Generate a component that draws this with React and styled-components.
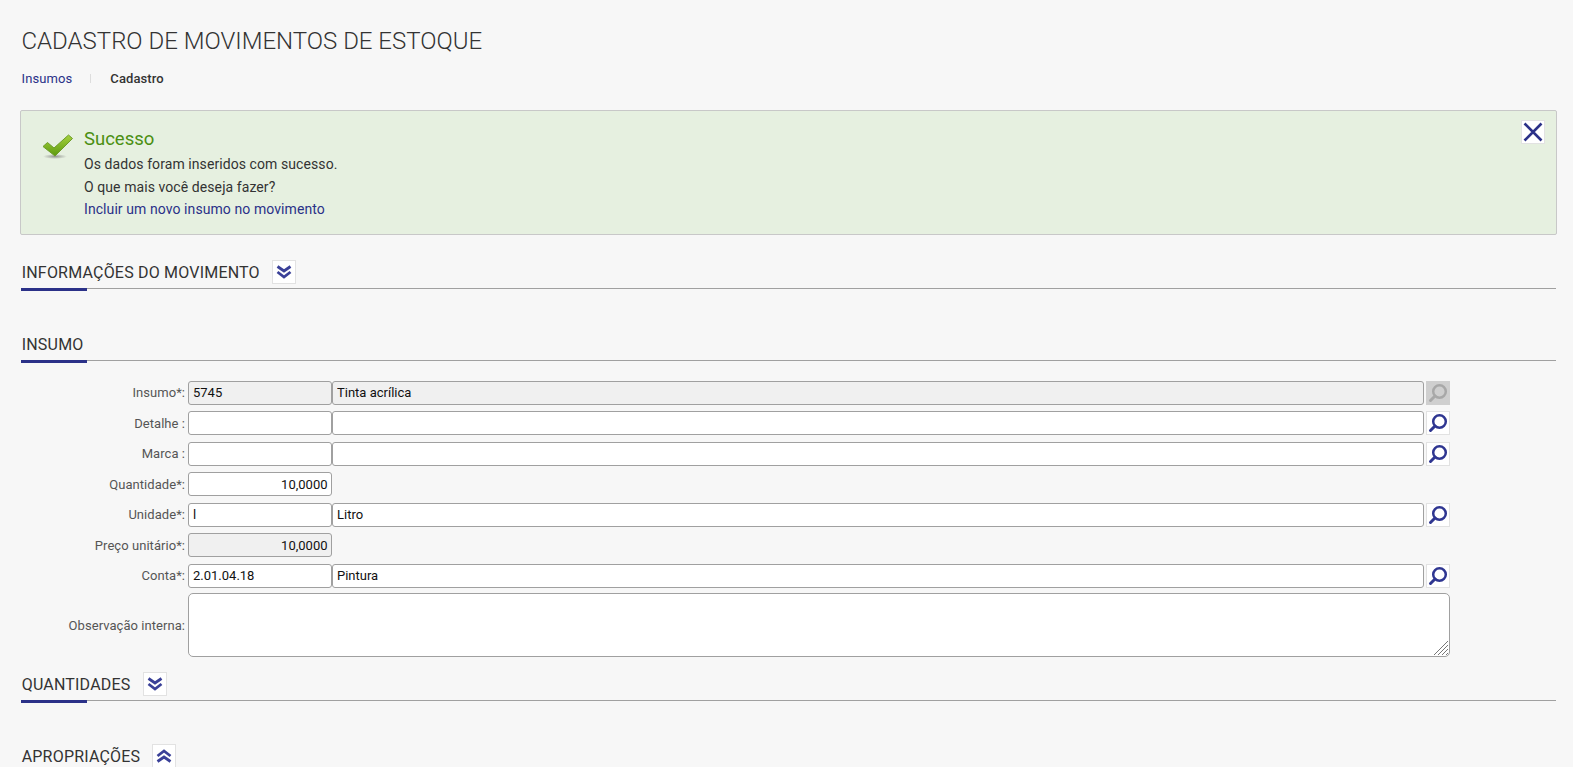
import React from 'react';
import styled, { createGlobalStyle } from 'styled-components';

const Global = createGlobalStyle`
  html, body { margin: 0; padding: 0; background: #f7f7f7; overflow: hidden; }
  body { font-family: Roboto, "Liberation Sans", sans-serif; color: #333; }
`;
const NAVY = '#2b3188';

const Page = styled.main`
  height: 767px;
  padding: 0 16px 0 20px;
  box-sizing: border-box;
  overflow: hidden;
`;
const Title = styled.h1`
  margin: 0;
  padding: 26px 0 0 1.5px;
  font-size: 24px;
  line-height: 30px;
  font-weight: 300;
  color: #333;
`;
const Breadcrumb = styled.nav`
  display: flex;
  align-items: center;
  height: 16px;
  margin-top: 14px;
  padding-left: 1.5px;
  font-size: 13px;
  letter-spacing: 0.1px;
`;
const Crumb = styled.a`
  color: ${NAVY};
`;
const CrumbSep = styled.span`
  width: 1px;
  height: 9px;
  margin: 0 19px 0 18px;
  background: #ddd;
`;
const CrumbCurrent = styled.strong`
  font-weight: 500;
  color: #333;
`;
const Alert = styled.section`
  position: relative;
  display: flex;
  height: 125px;
  margin-top: 24px;
  padding: 17px 0 0 21px;
  box-sizing: border-box;
  background: #e6f0e0;
  border: 1px solid #c8c8c8;
  border-radius: 2px;
`;
const AlertIconSlot = styled.div`
  width: 42px;
  padding-top: 5px;
  flex: none;
`;
const AlertBody = styled.div`
  font-size: 14px;
  letter-spacing: 0.08px;
`;
const AlertTitle = styled.div`
  font-size: 18.5px;
  line-height: 21px;
  letter-spacing: 0;
  color: #4b8f12;
  padding-top: 1px;
  margin-bottom: 3px;
`;
const AlertLine = styled.div`
  line-height: 22.5px;
  color: ${p => (p.$link ? NAVY : '#333')};
`;
const IconButton = styled.button`
  display: flex;
  align-items: center;
  justify-content: center;
  width: 24px;
  height: 24px;
  padding: 0;
  flex: none;
  box-sizing: border-box;
  background: ${p => (p.$disabled ? '#cfcfcf' : '#fff')};
  border: 1px solid ${p => (p.$disabled ? '#cfcfcf' : '#e2e2e2')};
`;
const CloseSlot = styled.div`
  position: absolute;
  top: 9px;
  right: 11px;
`;
const SectionHead = styled.header`
  position: relative;
  display: flex;
  align-items: center;
  gap: 12px;
  height: 30px;
  margin: ${p => p.$mt || 0}px 1px 0;
  padding-bottom: 4px;
  box-sizing: border-box;
  border-bottom: 1px solid #a0a0a0;
  &::after {
    content: '';
    position: absolute;
    left: 0;
    bottom: -3px;
    width: 66px;
    height: 3px;
    background: ${NAVY};
  }
`;
const SectionTitle = styled.h2`
  margin: 0 0 0 0.7px;
  font-size: 16px;
  font-weight: 400;
  line-height: 18px;
  letter-spacing: 0.2px;
  color: #333;
  position: relative;
  top: 1px;
`;
const Form = styled.form`
  display: flex;
  flex-direction: column;
  gap: 6.5px;
  margin: 19.6px 107px 0 1px;
`;
const Row = styled.div`
  display: flex;
  align-items: center;
  height: 24px;
`;
const TallRow = styled(Row)`
  height: 64px;
  margin-top: -1.1px;
`;
const Label = styled.label`
  width: 164px;
  margin-right: 3px;
  flex: none;
  text-align: right;
  font-size: 13px;
  letter-spacing: 0.05px;
  color: #555;
`;
const Field = styled.input`
  height: 24px;
  box-sizing: border-box;
  padding: 0 3px;
  font: 13px Roboto, sans-serif;
  color: #111;
  border: 1px solid #a0a0a0;
  border-radius: 3px;
  outline: none;
  background: ${p => (p.disabled ? '#f0f0f0' : '#fff')};
  text-align: ${p => (p.$right ? 'right' : 'left')};
  opacity: 1;
  -webkit-text-fill-color: #111;
`;
const CodeField = styled(Field)`
  width: 143.5px;
  padding: 0 3px 0 ${p => (p.$right ? 3 : 4)}px;
  flex: none;
`;
const NameField = styled(Field)`
  flex: 1;
  min-width: 0;
  margin-left: 0.5px;
  padding-left: 4px;
`;
const LookupSlot = styled.div`
  margin-left: 2.5px;
  flex: none;
`;
const NotesWrap = styled.div`
  position: relative;
  flex: 1;
  height: 64px;
`;
const Notes = styled.textarea`
  display: block;
  width: 100%;
  height: 64px;
  box-sizing: border-box;
  background: #fff;
  border: 1px solid #a0a0a0;
  border-radius: 5px;
  outline: none;
  padding: 4px;
  resize: none;
`;
const GripSlot = styled.span`
  position: absolute;
  right: 1px;
  bottom: 1px;
  width: 16px;
  height: 16px;
  pointer-events: none;
`;

const Check = () => (
  <svg width="32" height="27" viewBox="0 0 32 27">
    <defs>
      <linearGradient id="chk" x1="0" y1="0" x2="0" y2="1">
        <stop offset="0" stopColor="#a6d23e" />
        <stop offset="1" stopColor="#5c9a0e" />
      </linearGradient>
      <radialGradient id="shd">
        <stop offset="0" stopColor="#777" stopOpacity=".75" />
        <stop offset="1" stopColor="#777" stopOpacity="0" />
      </radialGradient>
    </defs>
    <ellipse cx="13" cy="23.5" rx="12" ry="2.5" fill="url(#shd)" />
    <path d="M1 13.5 L5.5 9.5 L12 15 L26.5 2 L30.5 5.5 L13 23 Z" fill="url(#chk)" stroke="#6d9c2a" strokeWidth="1" strokeLinejoin="round" />
  </svg>
);
const CloseGlyph = () => (
  <svg width="22" height="22" viewBox="0 0 22 22">
    <path d="M2.5 2.5 L19.5 19.5 M19.5 2.5 L2.5 19.5" stroke={NAVY} strokeWidth="2.6" fill="none" />
  </svg>
);
const Chevrons = ({ up }) => (
  <svg width="16" height="14" viewBox="0 0 16 14" style={up ? { transform: 'scaleY(-1)' } : undefined}>
    <path d="M1.5 1.5 L8 6 L14.5 1.5 M1.5 7 L8 12 L14.5 7" stroke="#3a4098" strokeWidth="2.8" fill="none" />
  </svg>
);
const Lens = ({ off }) => (
  <svg width="22" height="22" viewBox="0 0 22 22">
    <circle cx="12.5" cy="9.5" r="6.3" stroke={off ? '#a8a8a8' : '#2f3691'} strokeWidth="2.5" fill={off ? 'none' : '#fff'} />
    <path d="M8 14 L3.5 18.5" stroke={off ? '#a8a8a8' : '#2f3691'} strokeWidth="3" strokeLinecap="round" fill="none" />
  </svg>
);
const Grip = () => (
  <svg width="16" height="16" viewBox="0 0 16 16">
    <path d="M1 15 L15 1 M5 15 L15 5 M9 15 L15 9 M13 15 L15 13" stroke="#777" strokeWidth="1" fill="none" />
  </svg>
);

const Lookup = ({ off }) => (
  <LookupSlot>
    <IconButton type="button" $disabled={off} aria-label="Pesquisar"><Lens off={off} /></IconButton>
  </LookupSlot>
);

const Section = ({ title, mt, icon }) => (
  <SectionHead $mt={mt}>
    <SectionTitle>{title}</SectionTitle>
    {icon && <IconButton type="button" aria-label="Alternar"><Chevrons up={icon === 'up'} /></IconButton>}
  </SectionHead>
);

export default function App() {
  return (
    <>
      <Global />
      <Page>
        <Title>CADASTRO DE MOVIMENTOS DE ESTOQUE</Title>
        <Breadcrumb>
          <Crumb>Insumos</Crumb>
          <CrumbSep />
          <CrumbCurrent>Cadastro</CrumbCurrent>
        </Breadcrumb>
        <Alert>
          <AlertIconSlot><Check /></AlertIconSlot>
          <AlertBody>
            <AlertTitle>Sucesso</AlertTitle>
            <AlertLine>Os dados foram inseridos com sucesso.</AlertLine>
            <AlertLine>O que mais você deseja fazer?</AlertLine>
            <AlertLine $link>Incluir um novo insumo no movimento</AlertLine>
          </AlertBody>
          <CloseSlot><IconButton type="button" aria-label="Fechar"><CloseGlyph /></IconButton></CloseSlot>
        </Alert>

        <Section title="INFORMAÇÕES DO MOVIMENTO" mt={24} icon="down" />
        <Section title="INSUMO" mt={42} />

        <Form onSubmit={e => e.preventDefault()}>
          <Row>
            <Label>Insumo*:</Label>
            <CodeField disabled defaultValue="5745" />
            <NameField disabled defaultValue="Tinta acrílica" />
            <Lookup off />
          </Row>
          <Row>
            <Label>Detalhe :</Label>
            <CodeField />
            <NameField />
            <Lookup />
          </Row>
          <Row>
            <Label>Marca :</Label>
            <CodeField />
            <NameField />
            <Lookup />
          </Row>
          <Row>
            <Label>Quantidade*:</Label>
            <CodeField $right defaultValue="10,0000" />
          </Row>
          <Row>
            <Label>Unidade*:</Label>
            <CodeField defaultValue="l" />
            <NameField defaultValue="Litro" />
            <Lookup />
          </Row>
          <Row>
            <Label>Preço unitário*:</Label>
            <CodeField $right disabled defaultValue="10,0000" />
          </Row>
          <Row>
            <Label>Conta*:</Label>
            <CodeField defaultValue="2.01.04.18" />
            <NameField defaultValue="Pintura" />
            <Lookup />
          </Row>
          <TallRow>
            <Label>Observação interna:</Label>
            <NotesWrap>
              <Notes />
              <GripSlot><Grip /></GripSlot>
            </NotesWrap>
          </TallRow>
        </Form>

        <Section title="QUANTIDADES" mt={14} icon="down" />
        <Section title="APROPRIAÇÕES" mt={42} icon="up" />
      </Page>
    </>
  );
}
